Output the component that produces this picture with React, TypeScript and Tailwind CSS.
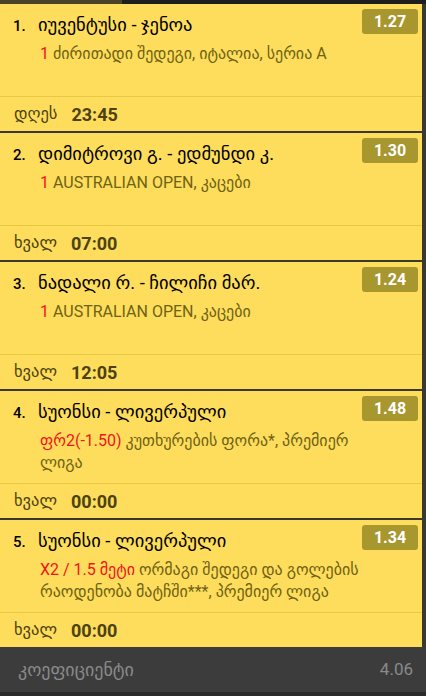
const BETS = [
  {
    id: 1,
    title: "იუვენტუსი - ჯენოა",
    pick: "1",
    market: "ძირითადი შედეგი, იტალია, სერია A",
    day: "დღეს",
    time: "23:45",
    odd: "1.27",
  },
  {
    id: 2,
    title: "დიმიტროვი გ. - ედმუნდი კ.",
    pick: "1",
    market: "AUSTRALIAN OPEN, კაცები",
    day: "ხვალ",
    time: "07:00",
    odd: "1.30",
  },
  {
    id: 3,
    title: "ნადალი რ. - ჩილიჩი მარ.",
    pick: "1",
    market: "AUSTRALIAN OPEN, კაცები",
    day: "ხვალ",
    time: "12:05",
    odd: "1.24",
  },
  {
    id: 4,
    title: "სუონსი - ლივერპული",
    pick: "ფრ2(-1.50)",
    market: "კუთხურების ფორა*, პრემიერ ლიგა",
    day: "ხვალ",
    time: "00:00",
    odd: "1.48",
  },
  {
    id: 5,
    title: "სუონსი - ლივერპული",
    pick: "X2 / 1.5 მეტი",
    market: "ორმაგი შედეგი და გოლების რაოდენობა მატჩში***, პრემიერ ლიგა",
    day: "ხვალ",
    time: "00:00",
    odd: "1.34",
  },
];

type Bet = (typeof BETS)[number];

function BetCard({ bet }: { bet: Bet }) {
  return (
    <div className="h-[127px] flex flex-col bg-[#fedd5c]">
      {/* Event + market */}
      <div className="h-[92px] pl-[13px] pr-[4px] pt-[5px]">
        <div className="float-right w-[56px] h-[25px] rounded-[3px] bg-[#a8972f] text-white font-bold text-[16px] leading-[25px] text-center">
          {bet.odd}
        </div>
        <div className="flex items-baseline pt-[5px] leading-[22px] text-black">
          <span className="w-[25px] shrink-0 text-[15px] font-medium">{bet.id}.</span>
          <span className="text-[18.5px]">{bet.title}</span>
        </div>
        <div className="clear-right ml-[27px] mr-[38px] mt-[6px] text-[16px] leading-[22px] text-[#6e6214]">
          <span className="text-[#f0141e]">{bet.pick}</span> {bet.market}
        </div>
      </div>

      {/* Start time */}
      <div className="flex-1 flex items-center pl-[14px] border-t border-[#e8c944] text-[#4d4212]">
        <span className="text-[16.5px]">{bet.day}</span>
        <span className="ml-[14px] text-[18px] font-bold">{bet.time}</span>
      </div>
    </div>
  );
}

export default function App() {
  return (
    <div
      className="w-[426px] h-[696px] flex flex-col bg-[#323232] overflow-hidden"
      style={{ fontFamily: "Roboto, 'DejaVu Sans', sans-serif" }}
    >
      <div className="h-[4px] flex shrink-0">
        <div className="w-[122px] bg-[#4a432a]" />
        <div className="flex-1 bg-[#1e1e1e]" />
      </div>

      <div className="flex flex-col gap-[2px] pr-[4px] bg-[#3a3930]">
        {BETS.map((bet) => (
          <BetCard key={bet.id} bet={bet} />
        ))}
      </div>

      <div className="flex-1 flex flex-col">
        <div className="flex-1 flex items-center justify-between pl-[18px] pr-[13px] bg-[#3c3c3c] text-[#8a8a8a]">
          <span className="text-[18px]">კოეფიციენტი</span>
          <span className="text-[17px]">4.06</span>
        </div>
        <div className="h-[4px] bg-[#2a2a2a]" />
      </div>
    </div>
  );
}
